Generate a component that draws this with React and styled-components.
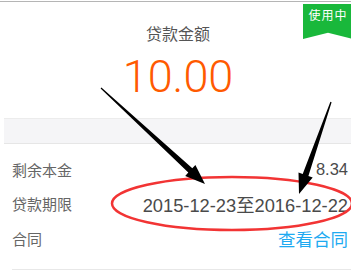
import React from 'react'
import styled, { createGlobalStyle } from 'styled-components'

const GlobalStyle = createGlobalStyle`
  html, body { margin: 0; padding: 0; background: #fff; }
  body { font-family: "Liberation Sans", "Noto Sans CJK SC", sans-serif; }
`

const Screen = styled.div`
  position: relative;
  width: 351px;
  height: 272px;
  overflow: hidden;
  background: #fff;
`

const TopRule = styled.div`
  height: 1px;
  margin-top: 1px;
  background: #b5b5b5;
`

const Header = styled.div`
  display: flex;
  flex-direction: column;
  align-items: center;
  padding: 22px 0 0 5px;
  height: 94px;
`

const Title = styled.div`
  font-size: 16px;
  line-height: 22px;
  color: #555;
`

const Amount = styled.div`
  margin-top: 8px;
  font-family: Roboto, "Liberation Sans", sans-serif;
  font-weight: 300;
  font-size: 45px;
  line-height: 46px;
  color: #ff5a00;
`

const Gap = styled.div`
  margin-left: 4px;
  height: 24px;
  background: #f5f5f7;
  border-top: 1px solid #ececec;
  border-bottom: 1px solid #e6e6e6;
`

const List = styled.div`
  margin-left: 12px;
  padding: 8px 3px 13px 0;
  border-bottom: 1px solid #e8e8e8;
`

const Row = styled.div`
  display: flex;
  align-items: center;
  justify-content: space-between;
  height: 34.5px;
`

const Label = styled.span`
  font-size: 15px;
  color: #666;
`

const Value = styled.span`
  font-size: ${p => p.size || 15}px;
  color: ${p => (p.link ? '#1eaaf1' : '#4a4a4a')};
`

const Badge = styled.div`
  position: absolute;
  top: 4px;
  right: -2px;
  width: 50px;
  height: 35px;
  background: #19b83b;
  clip-path: polygon(0 0, 100% 0, 100% 100%, 50% 82%, 0 100%);
  color: #fff;
  font-size: 12px;
  text-align: center;
  line-height: 24px;
  letter-spacing: 1px;
`

const Overlay = styled.svg`
  position: absolute;
  left: 0;
  top: 0;
  pointer-events: none;
`

function arrowPoints(x1, y1, x2, y2) {
  const dx = x2 - x1
  const dy = y2 - y1
  const len = Math.hypot(dx, dy)
  const ux = dx / len
  const uy = dy / len
  const nx = -uy
  const ny = ux
  const headLen = 20
  const headW = 7.5
  const shaftW = 3
  const tailW = 0.6
  const bx = x2 - ux * headLen
  const by = y2 - uy * headLen
  const pts = [
    [x1 + nx * tailW, y1 + ny * tailW],
    [bx + nx * shaftW, by + ny * shaftW],
    [bx + nx * headW, by + ny * headW],
    [x2, y2],
    [bx - nx * headW, by - ny * headW],
    [bx - nx * shaftW, by - ny * shaftW],
    [x1 - nx * tailW, y1 - ny * tailW],
  ]
  return pts.map(p => p.map(v => v.toFixed(1)).join(',')).join(' ')
}

const rows = [
  { label: '剩余本金', value: '8.34', size: 16.5 },
  { label: '贷款期限', value: '2015-12-23至2016-12-22', size: 18.3 },
  { label: '合同', value: '查看合同', size: 17.5, link: true },
]

export default function App() {
  return (
    <>
      <GlobalStyle />
      <Screen>
        <TopRule />
        <Header>
          <Title>贷款金额</Title>
          <Amount>10.00</Amount>
        </Header>
        <Gap />
        <List>
          {rows.map(r => (
            <Row key={r.label}>
              <Label>{r.label}</Label>
              <Value size={r.size} link={r.link}>{r.value}</Value>
            </Row>
          ))}
        </List>
        <Badge>使用中</Badge>
        <Overlay width="351" height="272" viewBox="0 0 351 272">
          <ellipse cx="232" cy="203.5" rx="120" ry="26.5" fill="none" stroke="#f23434" strokeWidth="2.5" />
          <polygon points={arrowPoints(101, 88, 205, 184)} fill="#000" />
          <polygon points={arrowPoints(331, 102, 299, 194)} fill="#000" />
        </Overlay>
      </Screen>
    </>
  )
}
